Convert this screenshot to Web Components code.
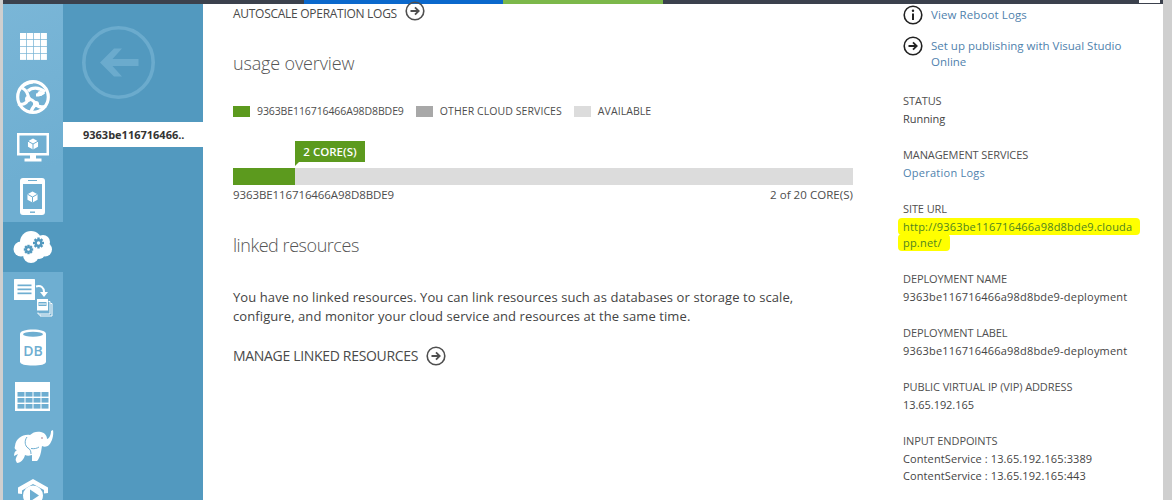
<!DOCTYPE html>
<html lang="en">
<head>
<meta charset="utf-8">
<title>cloud service dashboard</title>
<style>
  html, body { margin: 0; padding: 0; height: 500px; overflow: hidden; background: #fff; }
</style>
</head>
<body>
<portal-shell>
  <nav-rail slot="rail"></nav-rail>
  <blade-panel slot="panel" label="9363be116716466.."></blade-panel>
  <usage-main slot="main"></usage-main>
  <quick-glance slot="side"></quick-glance>
</portal-shell>

<script>
const FONT = '"Open Sans", "Noto Sans", "Liberation Sans", sans-serif';

// top strip, grey edges and the four columns
class PortalShell extends HTMLElement {
  constructor() {
    super();
    this.attachShadow({ mode: 'open' });
    this.shadowRoot.innerHTML = `
      <style>
        :host { display: grid; grid-template-columns: 3px 1160px 9px; width: 1172px; height: 500px; overflow: hidden; background: #cfcfcf; font-family: ${FONT}; }
        .center { display: flex; flex-direction: column; height: 500px; background: #fff; overflow: hidden; }
        .top { display: flex; height: 4px; flex: none; background: #3b414d; }
        .top .a { width: 301px; }
        .top .blue { width: 199px; background: #0a68cc; }
        .top .green { width: 160px; background: #7cb84a; }
        .top .b { width: 476px; }
        .top .w { width: 21px; height: 3px; background: #fff; }
        .row { display: flex; flex: 1; min-height: 0; }
      </style>
      <div></div>
      <div class="center">
        <div class="top"><div class="a"></div><div class="blue"></div><div class="green"></div><div class="b"></div><div class="w"></div></div>
        <div class="row">
          <slot name="rail"></slot>
          <slot name="panel"></slot>
          <slot name="main"></slot>
          <slot name="side"></slot>
        </div>
      </div>
      <div></div>`;
  }
}

const RAIL = '#6eaed1';
const ACTIVE = '#5299bf';

function gridCells() {
  let out = '';
  for (let r = 0; r < 4; r++) {
    for (let c = 0; c < 4; c++) {
      out += `<rect x="${17 + c * 6.9}" y="${11 + r * 6.9}" width="6.2" height="6.2"/>`;
    }
  }
  return out;
}

function tableCells() {
  let out = '';
  for (let r = 0; r < 3; r++) {
    for (let c = 0; c < 4; c++) {
      out += `<rect x="${14.5 + c * 8}" y="${20 + r * 6}" width="7" height="4.6" fill="${RAIL}"/>`;
    }
  }
  return out;
}

function cube(cx, cy, s, line) {
  return `<path d="M${cx} ${cy - s}l${s * .9} ${s * .5}v${s}l${-s * .9} ${s * .5}l${-s * .9} ${-s * .5}v${-s}z" fill="#fff"/>
    <path d="M${cx - s * .9} ${cy - s * .5}l${s * .9} ${s * .5}l${s * .9} ${-s * .5}M${cx} ${cy}v${s}" stroke="${line}" stroke-width="1" fill="none"/>`;
}

function gear(cx, cy, r, fill) {
  let teeth = '';
  for (let i = 0; i < 8; i++) {
    teeth += `<rect x="${cx - 1.2}" y="${cy - r - 1.6}" width="2.4" height="3" transform="rotate(${i * 45} ${cx} ${cy})"/>`;
  }
  return `<g fill="${fill}">${teeth}<circle cx="${cx}" cy="${cy}" r="${r}"/></g><circle cx="${cx}" cy="${cy}" r="${r * .42}" fill="#fff"/>`;
}

const RAIL_ICONS = [
  gridCells(),
  // globe
  `<circle cx="30" cy="25" r="15.300" fill="none" stroke="#fff" stroke-width="3.200"/>
   <path d="M18 15c5 3 8 7 7 12s-6 6-10 5M30 10c-6 1-10 3-12 6M25 19c4-4 11-4 17 1M25 27c4 0 6 2 8 5s5 4 10 2M33 32c-3 3-5 6-5 9M41 20c-2 2-5 3-8 3" fill="none" stroke="#fff" stroke-width="3.200"/>
   <circle cx="25" cy="27" r="3"/><circle cx="33" cy="32" r="3"/><circle cx="37" cy="21.500" r="2.500"/>`,
  // monitor
  `<path fill-rule="evenodd" d="M14 11h32v22.500H14zM16.500 13.500v17.500h27V13.500z"/>
   <path d="M27 33h6v3.500h5.500V39.500h-17V36.500H27z"/>${cube(30, 22, 5.6, RAIL)}`,
  // phone
  `<path fill-rule="evenodd" d="M20 6h19a3 3 0 0 1 3 3v31a3 3 0 0 1-3 3H20a3 3 0 0 1-3-3V9a3 3 0 0 1 3-3zM20 12v25h19V12z"/>
   <rect x="25" y="8" width="9" height="1" fill="${RAIL}"/><rect x="27" y="39.500" width="5" height="1.400" fill="${RAIL}"/>${cube(29.500, 25, 5.6, RAIL)}`,
  // cloud with gears
  `<circle cx="28" cy="20" r="11"/><circle cx="18" cy="27" r="7.500"/><circle cx="40" cy="20" r="7"/><circle cx="42" cy="27.500" r="7"/><circle cx="28" cy="33" r="8"/><circle cx="36" cy="31" r="6"/>
   ${gear(35.500, 21, 3.900, ACTIVE)}${gear(25.500, 27.500, 3.100, ACTIVE)}`,
  // doc, arrow and copied doc
  `<rect x="11" y="7" width="21" height="21" rx=".6"/>
   <g fill="${RAIL}"><rect x="14.500" y="12.500" width="14" height="1.700"/><rect x="14.500" y="16.500" width="14" height="1.700"/><rect x="14.500" y="20.500" width="14" height="1.700"/></g>
   <path d="M33 14.500c5-1.500 8 1 8 5.500" fill="none" stroke="#fff" stroke-width="2"/><path d="M37 20h8l-4 5z"/>
   <path fill="none" stroke="#fff" stroke-width="1" d="M47.500 31.500h1.500v12.500H37v-1.500M45.500 29.500h1.500v12.500H35v-1.500"/>
   <rect x="34" y="27" width="11" height="11.500"/><rect x="35.500" y="30" width="8" height="4" fill="${RAIL}"/><rect x="36" y="31.500" width="7" height="1" fill="#fff"/>`,
  // database
  `<path d="M17 12c0-3 5.500-4.500 13-4.500s13 1.500 13 4.500v27.500c0 3-5.500 4-13 4s-13-1-13-4z"/>
   <ellipse cx="30" cy="12.300" rx="10" ry="2.500" fill="${RAIL}"/>
   <text x="30" y="33.500" text-anchor="middle" font-family='"Open Sans", sans-serif' font-size="14" font-weight="600" fill="${RAIL}">DB</text>`,
  // table
  `<rect x="12" y="10" width="35" height="29"/>${tableCells()}`,
  // elephant
  `<path d="M12 24C13 16 20 12 27 13C30 10 34 9 38 10C42 11 44 14 44 17C46 17 48 13 48 9L50 8C51 13 49 20 46 23C44 25 41 25 39 24L38 30C37 35 35 38 34 39L29 39L29 33C26 34 24 34 22 33C21 37 18 41 14 41L13 39C12 37 14 34 15 32L11 34C11 31 12 29 14 28C12 28 11 26 12 24Z"/>
   <path d="M24 15c-3 4-2 9 1 11 2 1 3 3 3 6M36 25c-2 1.500-5 2-8 1.500" fill="none" stroke="${RAIL}" stroke-width="1"/><circle cx="39" cy="16" r="1" fill="#c9a9b5"/>`,
  // media hex
  `<path fill-rule="evenodd" d="M30 7l15 8.500v5.500l-4 .5v-3.500L30 12 19 18.500v3.500l-4-.5v-6z"/>
   <circle cx="30" cy="23.500" r="10" fill="#fff"/><path d="M27 17.500l9 6-9 6z" fill="${RAIL}"/>`
];

class NavRail extends HTMLElement {
  constructor() {
    super();
    this.attachShadow({ mode: 'open' });
    const items = RAIL_ICONS.map((icon, i) =>
      `<div class="item ${i === 4 ? 'active' : ''}"><svg viewBox="0 0 60 50" width="60" height="50" fill="#fff">${icon}</svg></div>`).join('');
    this.shadowRoot.innerHTML = `
      <style>
        :host { display: block; width: 60px; flex: none; height: 496px; overflow: hidden; background: linear-gradient(160deg, #7ab6d7 0%, ${RAIL} 35%); padding-top: 18px; box-sizing: border-box; }
        .item { height: 50px; }
        .item.active { background: ${ACTIVE}; }
        svg { display: block; }
      </style>
      ${items}`;
  }
}

class BladePanel extends HTMLElement {
  constructor() {
    super();
    this.attachShadow({ mode: 'open' });
  }

  connectedCallback() {
    const label = this.getAttribute('label') || '';
    this.shadowRoot.innerHTML = `
      <style>
        :host { display: block; width: 140px; flex: none; background: ${ACTIVE}; padding-top: 22px; box-sizing: border-box; }
        svg { display: block; margin-left: 19px; }
        .item { margin-top: 23px; height: 25px; background: #fff; color: #333; font-size: 11px; font-weight: 700; line-height: 25px; padding-left: 20px; }
      </style>
      <svg width="73" height="73" viewBox="0 0 73 73" fill="none">
        <circle cx="36.500" cy="36.500" r="34.700" stroke="#6babcd" stroke-width="3.600"/>
        <path d="M18 36.500L32 22.500h8l-9.500 10.500h26v7h-26l9.500 10.500h-8z" fill="#6babcd"/>
      </svg>
      <div class="item">${label}</div>`;
  }
}

// circle with arrow or "i", as used next to links
class CircleIcon extends HTMLElement {
  constructor() {
    super();
    this.attachShadow({ mode: 'open' });
  }

  connectedCallback() {
    const kind = this.getAttribute('kind') || 'arrow';
    const color = this.getAttribute('color') || '#444';
    const glyph = kind === 'info'
      ? `<path d="M10 8.500v6.500" stroke="${color}" stroke-width="2"/><circle cx="10" cy="5.700" r="1.200" fill="${color}"/>`
      : `<path d="M5.500 10h8M10 6.300l3.700 3.700L10 13.700" stroke="${color}" stroke-width="1.800" fill="none"/>`;
    this.shadowRoot.innerHTML = `
      <style>
        :host { display: block; flex: none; width: 20px; height: 20px; }
        svg { display: block; }
      </style>
      <svg width="20" height="20" viewBox="0 0 20 20"><circle cx="10" cy="10" r="8.800" fill="none" stroke="${color}" stroke-width="1.600"/>${glyph}</svg>`;
  }
}

class ActionLink extends HTMLElement {
  constructor() {
    super();
    this.attachShadow({ mode: 'open' });
    this.shadowRoot.innerHTML = `
      <style>
        :host { display: flex; align-items: center; gap: 8px; height: 18px; font-size: 14px; line-height: 18px; color: #4a4a4a; letter-spacing: -.32px; }
        :host(.small) { font-size: 12px; letter-spacing: -.28px; }
        :host(.small) circle-icon { margin-top: -4px; }
        :host(.small) slot { display: block; padding-top: 1px; }
      </style>
      <slot></slot><circle-icon color="#4f4f4f"></circle-icon>`;
  }
}

class SectionHeading extends HTMLElement {
  constructor() {
    super();
    this.attachShadow({ mode: 'open' });
    this.shadowRoot.innerHTML = `
      <style>
        :host { display: block; height: 28px; font-size: 18px; font-weight: 300; line-height: 28px; color: #555; }
      </style>
      <slot></slot>`;
  }
}

class UsageBar extends HTMLElement {
  constructor() {
    super();
    this.attachShadow({ mode: 'open' });
    this.shadowRoot.innerHTML = `
      <style>
        :host { display: block; font-size: 11px; color: #4d4d4d; }
        .legend { display: flex; align-items: center; height: 18px; line-height: 18px; font-size: 10.500px; letter-spacing: -.1px; }
        .sw { width: 17px; height: 11px; margin-right: 7px; }
        .sw1 { background: #5c9a1e; }
        .sw2 { background: #a8a8a8; margin-left: 12px; }
        .sw3 { background: #dcdcdc; margin-left: 12px; }
        .wide { letter-spacing: .08px; }
        .call { position: relative; margin: 21px 0 6px 62px; width: 70px; height: 21px; background: #5c9a1e; color: #fff; font-size: 11.500px; font-weight: 600; line-height: 21px; text-align: center; box-sizing: border-box; }
        .call::after { content: ""; position: absolute; left: 0; top: 21px; border-top: 4px solid #5c9a1e; border-right: 4px solid transparent; }
        .track { height: 17px; background: #dcdcdc; }
        .fill { width: 62px; height: 17px; background: #5c9a1e; }
        .labels { display: flex; justify-content: space-between; margin-top: 1px; height: 18px; line-height: 18px; font-size: 11.500px; letter-spacing: -.1px; }
        .labels .of { letter-spacing: .05px; }
      </style>
      <div class="legend">
        <div class="sw sw1"></div><span>9363BE116716466A98D8BDE9</span>
        <div class="sw sw2"></div><span class="wide">OTHER CLOUD SERVICES</span>
        <div class="sw sw3"></div><span class="wide">AVAILABLE</span>
      </div>
      <div class="call">2 CORE(S)</div>
      <div class="track"><div class="fill"></div></div>
      <div class="labels"><span>9363BE116716466A98D8BDE9</span><span class="of">2 of 20 CORE(S)</span></div>`;
  }
}

class UsageMain extends HTMLElement {
  constructor() {
    super();
    this.attachShadow({ mode: 'open' });
    this.shadowRoot.innerHTML = `
      <style>
        :host { display: block; width: 620px; flex: none; margin-left: 30px; }
        section-heading.first { margin-top: 27px; letter-spacing: -.15px; }
        usage-bar { margin-top: 25px; }
        section-heading.second { margin-top: 27px; letter-spacing: -.45px; }
        p { margin: 29px 0 21px; max-width: 600px; font-size: 13px; line-height: 19px; color: #444; letter-spacing: .09px; }
      </style>
      <action-link class="small">AUTOSCALE OPERATION LOGS</action-link>
      <section-heading class="first">usage overview</section-heading>
      <usage-bar></usage-bar>
      <section-heading class="second">linked resources</section-heading>
      <p>You have no linked resources. You can link resources such as databases or storage to scale, configure, and monitor your cloud service and resources at the same time.</p>
      <action-link>MANAGE LINKED RESOURCES</action-link>`;
  }
}

class SideField extends HTMLElement {
  constructor() {
    super();
    this.attachShadow({ mode: 'open' });
  }

  connectedCallback() {
    const label = this.getAttribute('label') || '';
    this.shadowRoot.innerHTML = `
      <style>
        :host { display: block; margin-bottom: 18px; font-size: 11px; line-height: 18px; color: #444; letter-spacing: -.05px; }
        .label { height: 18px; color: #505050; letter-spacing: -.1px; }
      </style>
      <div class="label">${label}</div>
      <div class="value"><slot></slot></div>`;
  }
}

class QuickGlance extends HTMLElement {
  constructor() {
    super();
    this.attachShadow({ mode: 'open' });
    this.shadowRoot.innerHTML = `
      <style>
        :host { display: block; width: 237px; flex: none; margin-left: 50px; padding-top: 2px; font-size: 11px; }
        .act { display: flex; gap: 8px; font-size: 11.500px; line-height: 16px; color: #4f82ad; }
        .act circle-icon { margin-top: -1px; }
        .act span { padding-top: 1px; }
        .act.view span { letter-spacing: .1px; }
        .act + .act { margin: 12px 0 22px; }
        a { color: #4f82ad; text-decoration: none; letter-spacing: .25px; }
        .url { margin-top: 1px; padding-bottom: 1px; width: 233px; font-size: 11px; line-height: 16px; word-break: break-all; color: #4f8420; letter-spacing: .2px; }
        .url span { background: #ffff00; -webkit-box-decoration-break: clone; box-decoration-break: clone; padding: 1px 8px 1px 5px; margin-left: -5px; border-radius: 4px; }
        .deploy { letter-spacing: .2px; }
        .endpoints { line-height: 17px; letter-spacing: .1px; }
      </style>
      <div class="act view"><circle-icon kind="info" color="#222"></circle-icon><span>View Reboot Logs</span></div>
      <div class="act"><circle-icon color="#222"></circle-icon><span>Set up publishing with Visual Studio Online</span></div>
      <side-field label="STATUS">Running</side-field>
      <side-field label="MANAGEMENT SERVICES"><a>Operation Logs</a></side-field>
      <side-field label="SITE URL"><div class="url"><span>http://9363be116716466a98d8bde9.cloudapp.net/</span></div></side-field>
      <side-field label="DEPLOYMENT NAME" class="deploy">9363be116716466a98d8bde9-deployment</side-field>
      <side-field label="DEPLOYMENT LABEL" class="deploy">9363be116716466a98d8bde9-deployment</side-field>
      <side-field label="PUBLIC VIRTUAL IP (VIP) ADDRESS">13.65.192.165</side-field>
      <side-field label="INPUT ENDPOINTS"><div class="endpoints">ContentService : 13.65.192.165:3389<br>ContentService : 13.65.192.165:443</div></side-field>`;
  }
}

customElements.define('circle-icon', CircleIcon);
customElements.define('action-link', ActionLink);
customElements.define('section-heading', SectionHeading);
customElements.define('usage-bar', UsageBar);
customElements.define('side-field', SideField);
customElements.define('nav-rail', NavRail);
customElements.define('blade-panel', BladePanel);
customElements.define('usage-main', UsageMain);
customElements.define('quick-glance', QuickGlance);
customElements.define('portal-shell', PortalShell);
</script>
</body>
</html>
